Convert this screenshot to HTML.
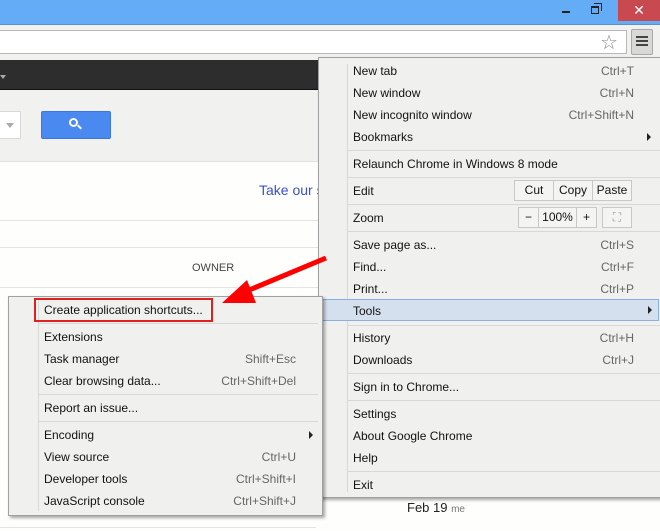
<!DOCTYPE html>
<html><head><style>
*{margin:0;padding:0;box-sizing:border-box}
body{width:660px;height:531px;position:relative;overflow:hidden;background:#fefefc;font-family:"Liberation Sans",sans-serif;font-size:12px;color:#111}
.a{position:absolute}
.menu{position:absolute;background:#f0f0ee;border:1px solid #a0a0a0;box-shadow:2px 2px 3px rgba(0,0,0,.35)}
.it{position:absolute;left:0;right:0;height:22px;line-height:22px}
.it .l{position:absolute}
.it .r{position:absolute;color:#666}
.sep{position:absolute;height:1px;background:#d8d8d6}
.tri{position:absolute;width:0;height:0;border-top:4px solid transparent;border-bottom:4px solid transparent;border-left:4px solid #222}
.bx{position:absolute;border:1px solid #c8c8c6;background:#f4f4f2;height:21px;line-height:19px;text-align:center}
</style></head><body>
<div class="a" style="left:0;top:0;width:660px;height:24px;background:#64acf6"></div>
<div class="a" style="left:618px;top:0;width:42px;height:21px;background:#c84a50;color:#fff;text-align:center;line-height:20px;font-size:14px">✕</div>
<div class="a" style="left:562px;top:11px;width:8px;height:2px;background:#222"></div>
<div class="a" style="left:591px;top:6px;width:8px;height:8px;border:1px solid #222;border-top-width:2px"></div>
<div class="a" style="left:594px;top:3px;width:8px;height:8px;border-top:1px solid #222;border-right:1px solid #222"></div>
<div class="a" style="left:0;top:24px;width:660px;height:36px;background:#f1f1ef;border-top:1px solid #5a8fd0"></div>
<div class="a" style="left:-2px;top:30px;width:629px;height:24px;background:#fff;border:1px solid #b8b8b8"></div>
<div class="a" style="left:600px;top:30px;font-size:20px;color:#888">☆</div>
<div class="a" style="left:631px;top:29px;width:22px;height:26px;background:#d8d8d6;border:1px solid #a8a8a8;border-radius:2px"></div>
<div class="a" style="left:636px;top:36px;width:12px;height:2px;background:#444;box-shadow:0 4px 0 #444,0 8px 0 #444"></div>
<div class="a" style="left:0;top:60px;width:320px;height:30px;background:#2d2d2d;border-bottom:1px solid #111"></div>
<div class="a" style="left:0;top:75px;border-top:4px solid #aaa;border-left:3px solid transparent;border-right:3px solid transparent"></div>
<div class="a" style="left:0;top:90px;width:320px;height:72px;background:#f1f1ef;border-bottom:1px solid #e0e0e0"></div>
<div class="a" style="left:-2px;top:111px;width:23px;height:28px;background:#fff;border:1px solid #d8d8d8"></div>
<div class="a" style="left:6px;top:123px;border-top:5px solid #aaa;border-left:4px solid transparent;border-right:4px solid transparent"></div>
<div class="a" style="left:41px;top:111px;width:70px;height:28px;background:#4a8af0;border:1px solid #3a78e0;border-radius:2px"></div>
<div class="a" style="left:69px;top:118px;width:9px;height:9px;border:2px solid #fff;border-radius:50%"></div>
<div class="a" style="left:77px;top:126px;width:5px;height:2px;background:#fff;transform:rotate(45deg)"></div>
<div class="a" style="left:259px;top:182px;color:#3a50d0;font-size:14px">Take our s</div>
<div class="a" style="left:0;top:220px;width:320px;height:1px;background:#e4e4e4"></div>
<div class="a" style="left:0;top:247px;width:320px;height:1px;background:#e4e4e4"></div>
<div class="a" style="left:192px;top:262px;font-size:11px;color:#444">OWNER</div>
<div class="a" style="left:0;top:287px;width:320px;height:1px;background:#e4e4e4"></div>
<div class="a" style="left:0;top:527px;width:316px;height:1px;background:#e4e4e4"></div>
<div class="a" style="left:407px;top:500px;font-size:13px;color:#222">Feb 19 <span style="font-size:10px;color:#777">me</span></div>

<div class="menu" style="left:318px;top:57px;width:344px;height:441px">
<div class="a" style="left:28px;top:6px;width:1px;height:428px;background:#d8d8d6"></div>
<div class="it" style="top:2px"><span class="l" style="left:34px">New tab</span><span class="r" style="right:27px">Ctrl+T</span></div>
<div class="it" style="top:24px"><span class="l" style="left:34px">New window</span><span class="r" style="right:27px">Ctrl+N</span></div>
<div class="it" style="top:46px"><span class="l" style="left:34px">New incognito window</span><span class="r" style="right:27px">Ctrl+Shift+N</span></div>
<div class="it" style="top:68px"><span class="l" style="left:34px">Bookmarks</span><span class="tri" style="right:10px;top:7px"></span></div>
<div class="sep" style="left:29px;right:0;top:92px"></div>
<div class="it" style="top:95px"><span class="l" style="left:34px">Relaunch Chrome in Windows 8 mode</span></div>
<div class="sep" style="left:29px;right:0;top:119px"></div>
<div class="it" style="top:122px"><span class="l" style="left:34px">Edit</span></div>
<div class="bx" style="left:195px;top:122px;width:40px">Cut</div>
<div class="bx" style="left:234px;top:122px;width:40px">Copy</div>
<div class="bx" style="left:273px;top:122px;width:40px">Paste</div>
<div class="sep" style="left:29px;right:0;top:146px"></div>
<div class="it" style="top:149px"><span class="l" style="left:34px">Zoom</span></div>
<div class="bx" style="left:199px;top:149px;width:21px">−</div>
<div class="bx" style="left:219px;top:149px;width:39px">100%</div>
<div class="bx" style="left:257px;top:149px;width:21px">+</div>
<div class="bx" style="left:283px;top:149px;width:30px;color:#999">⛶</div>
<div class="sep" style="left:29px;right:0;top:173px"></div>
<div class="it" style="top:176px"><span class="l" style="left:34px">Save page as...</span><span class="r" style="right:27px">Ctrl+S</span></div>
<div class="it" style="top:198px"><span class="l" style="left:34px">Find...</span><span class="r" style="right:27px">Ctrl+F</span></div>
<div class="it" style="top:220px"><span class="l" style="left:34px">Print...</span><span class="r" style="right:27px">Ctrl+P</span></div>
<div class="it" style="top:241px;background:#d5e0ee;border:1px solid #88b0e0;left:-1px;right:2px"><span class="l" style="left:34px">Tools</span><span class="tri" style="right:6px;top:6px"></span></div>
<div class="sep" style="left:29px;right:0;top:267px"></div>
<div class="it" style="top:269px"><span class="l" style="left:34px">History</span><span class="r" style="right:27px">Ctrl+H</span></div>
<div class="it" style="top:291px"><span class="l" style="left:34px">Downloads</span><span class="r" style="right:27px">Ctrl+J</span></div>
<div class="sep" style="left:29px;right:0;top:315px"></div>
<div class="it" style="top:318px"><span class="l" style="left:34px">Sign in to Chrome...</span></div>
<div class="sep" style="left:29px;right:0;top:342px"></div>
<div class="it" style="top:345px"><span class="l" style="left:34px">Settings</span></div>
<div class="it" style="top:367px"><span class="l" style="left:34px">About Google Chrome</span></div>
<div class="it" style="top:389px"><span class="l" style="left:34px">Help</span></div>
<div class="sep" style="left:29px;right:0;top:413px"></div>
<div class="it" style="top:416px"><span class="l" style="left:34px">Exit</span></div>
</div>

<div class="menu" style="left:8px;top:296px;width:315px;height:220px">
<div class="a" style="left:29px;top:4px;width:1px;height:210px;background:#d8d8d6"></div>
<div class="a" style="left:25px;top:1px;width:179px;height:24px;border:2px solid #e02020"></div>
<div class="it" style="top:2px"><span class="l" style="left:35px">Create application shortcuts...</span></div>
<div class="sep" style="left:30px;right:4px;top:26px"></div>
<div class="it" style="top:29px"><span class="l" style="left:35px">Extensions</span></div>
<div class="it" style="top:51px"><span class="l" style="left:35px">Task manager</span><span class="r" style="right:26px">Shift+Esc</span></div>
<div class="it" style="top:73px"><span class="l" style="left:35px">Clear browsing data...</span><span class="r" style="right:26px">Ctrl+Shift+Del</span></div>
<div class="sep" style="left:30px;right:4px;top:97px"></div>
<div class="it" style="top:100px"><span class="l" style="left:35px">Report an issue...</span></div>
<div class="sep" style="left:30px;right:4px;top:124px"></div>
<div class="it" style="top:127px"><span class="l" style="left:35px">Encoding</span><span class="tri" style="left:300px;top:7px"></span></div>
<div class="it" style="top:149px"><span class="l" style="left:35px">View source</span><span class="r" style="right:26px">Ctrl+U</span></div>
<div class="it" style="top:171px"><span class="l" style="left:35px">Developer tools</span><span class="r" style="right:26px">Ctrl+Shift+I</span></div>
<div class="it" style="top:193px"><span class="l" style="left:35px">JavaScript console</span><span class="r" style="right:26px">Ctrl+Shift+J</span></div>
</div>

<svg class="a" style="left:0;top:0" width="660" height="531">
<line x1="326" y1="258" x2="242" y2="293" stroke="#f00" stroke-width="5"/>
<polygon points="222,303 247,280 256,303" fill="#f00"/>
</svg>
</body></html>
